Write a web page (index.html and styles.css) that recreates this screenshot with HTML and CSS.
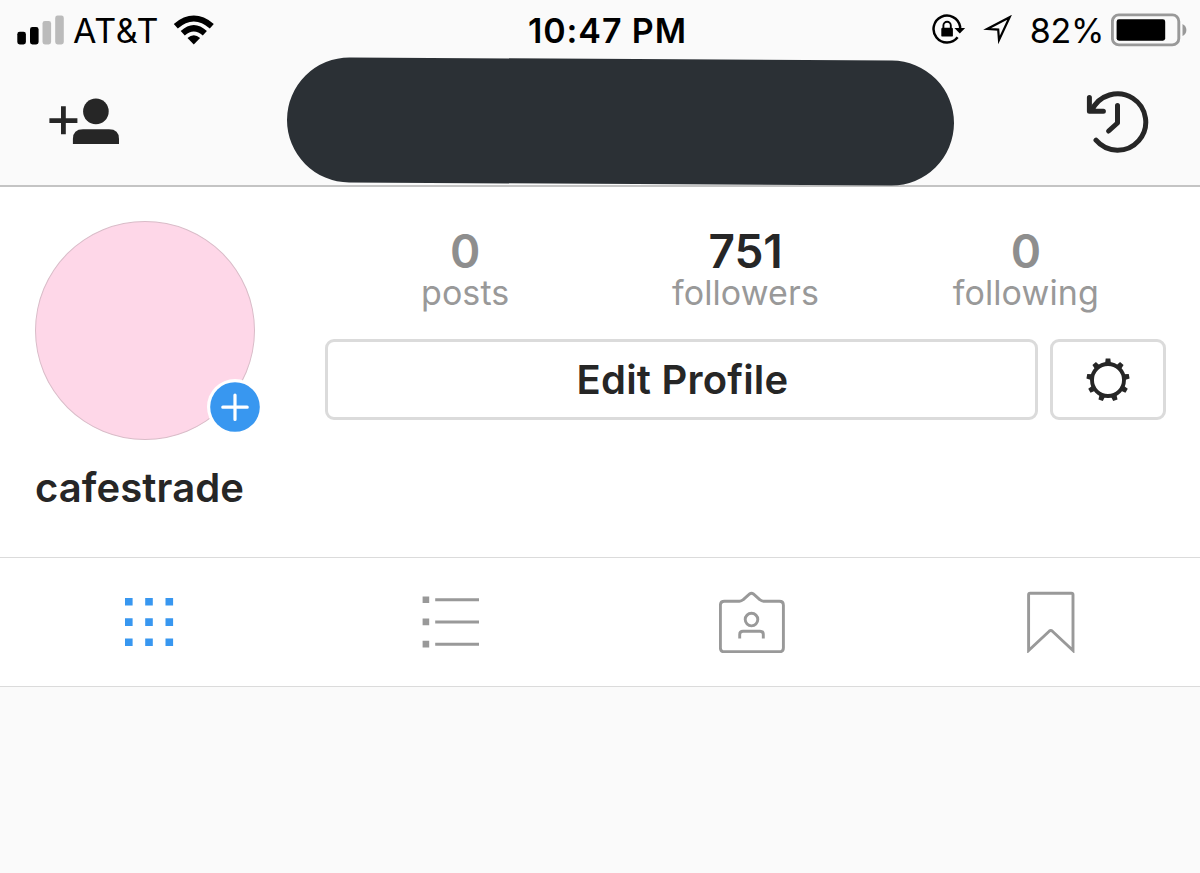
FILE: index.html
```html
<!DOCTYPE html>
<html lang="en">
<head>
  <meta charset="UTF-8">
  <title>cafestrade</title>
  <link rel="stylesheet" href="styles.css">
</head>
<body>
  <!-- Status bar -->
  <div class="status-bar">
    <div class="status-left">
      <svg class="signal" width="48" height="30" viewBox="0 0 48 30">
        <rect x="0.3" y="16.8" width="8.6" height="12.6" rx="2.4"/>
        <rect x="13" y="12" width="8.6" height="17.4" rx="2.4"/>
        <rect class="off" x="25.5" y="6" width="8.6" height="23.4" rx="2.4"/>
        <rect class="off" x="38.2" y="0.6" width="8.6" height="28.8" rx="2.4"/>
      </svg>
      <span class="carrier">AT&amp;T</span>
      <svg class="wifi" width="42" height="30" viewBox="0 0 42 30">
        <path d="M0.8 8.9 Q20.8 -7.7 40.8 8.9 L36.8 13.4 Q20.8 -0.6 4.8 13.4 Z"/>
        <path d="M7.7 16 Q20.8 4 33.9 16 L29.8 20.4 Q20.8 12.4 11.8 20.4 Z"/>
        <path d="M14.5 23 Q20.8 17.6 27.1 23 L20.8 29.6 Z"/>
      </svg>
    </div>
    <div class="status-time">10:47 PM</div>
    <div class="status-right">
      <svg class="lock" width="34" height="30" viewBox="0 0 34 30">
        <path d="M25.6 23.2 A13.4 13.4 0 1 1 28.1 12.5 V15" fill="none" stroke="#000" stroke-width="2.5"/>
        <path d="M22.4 14 H33.2 L27.8 19.4 Z"/>
        <rect x="9.3" y="13.8" width="11.6" height="8.8" rx="1.2"/>
        <path d="M11.4 14.5 V11.6 A3.7 3.8 0 0 1 18.8 11.6 V14.5" fill="none" stroke="#000" stroke-width="1.9"/>
      </svg>
      <svg class="location" width="30" height="30" viewBox="0 0 30 30">
        <path d="M26.6 2.2 L16 25 L15.2 14.6 L4.2 13.9 Z" fill="none" stroke="#000" stroke-width="2.2" stroke-miterlimit="8"/>
      </svg>
      <span class="percent">82%</span>
      <svg class="battery" width="76" height="34" viewBox="0 0 76 34">
        <rect x="1.4" y="1.9" width="66.4" height="30" rx="6.5" fill="none" stroke="#999" stroke-width="2.9"/>
        <rect x="5.6" y="6.3" width="48.6" height="21.4" rx="2.4"/>
        <path d="M71.5 11 Q75.4 13 75.4 17 Q75.4 21 71.5 23 Z" fill="#999"/>
      </svg>
    </div>
  </div>

  <!-- Navigation -->
  <header class="nav-bar">
    <svg class="add-user" width="72" height="48" viewBox="0 0 72 48">
      <path d="M14.4 9.3 V37.3 M0.4 23.6 H28.4" fill="none" stroke="#262626" stroke-width="4.8"/>
      <circle cx="46.9" cy="14.4" r="12.8"/>
      <path d="M23.9 46.9 V42 Q23.9 32.3 34 32.3 H60 Q70 32.3 70 42 V46.9 Z"/>
    </svg>
    <div class="hidden-name"></div>
    <svg class="history" width="64" height="64" viewBox="0 0 64 64">
      <path d="M5.8 19.5 A28.2 28.2 0 1 1 10 49.2"/>
      <path d="M3.4 6.5 V20.2 H17.4"/>
      <path d="M31.5 14.6 V32 L22.6 40"/>
    </svg>
  </header>

  <!-- Profile -->
  <section class="profile">
    <div class="profile-top">
      <div class="avatar">
        <svg class="avatar-add" width="56" height="56" viewBox="0 0 56 56">
          <circle cx="28" cy="28" r="28" fill="#fff"/>
          <circle cx="28" cy="28" r="24.8" fill="#3897f0"/>
          <path d="M28 16 V40.4 M15.8 28.2 H40.2" stroke="#fff" stroke-width="3.2" stroke-linecap="round"/>
        </svg>
      </div>
      <div class="info">
        <div class="stats">
          <div class="stat empty">
            <div class="count">0</div>
            <div class="label">posts</div>
          </div>
          <div class="stat">
            <div class="count">751</div>
            <div class="label">followers</div>
          </div>
          <div class="stat empty">
            <div class="count">0</div>
            <div class="label">following</div>
          </div>
        </div>
        <div class="actions">
          <button class="edit-button">Edit Profile</button>
          <button class="settings-button">
            <svg width="44" height="44" viewBox="-22 -22 44 44">
              <defs>
                <path id="tooth" d="M-3 -16 L-2.3 -21.5 H2.3 L3 -16 Z"/>
              </defs>
              <circle r="16" fill="none" stroke="#262626" stroke-width="3.9"/>
              <g fill="#262626">
                <use href="#tooth"/>
                <use href="#tooth" transform="rotate(40)"/>
                <use href="#tooth" transform="rotate(80)"/>
                <use href="#tooth" transform="rotate(120)"/>
                <use href="#tooth" transform="rotate(160)"/>
                <use href="#tooth" transform="rotate(200)"/>
                <use href="#tooth" transform="rotate(240)"/>
                <use href="#tooth" transform="rotate(280)"/>
                <use href="#tooth" transform="rotate(320)"/>
              </g>
            </svg>
          </button>
        </div>
      </div>
    </div>
    <h1 class="username">cafestrade</h1>
  </section>

  <!-- Tabs -->
  <nav class="tabs">
    <div class="tab active">
      <svg width="50" height="50" viewBox="0 0 50 50">
        <path d="M0 1h7.6v7.6h-7.6z M20.2 1h7.6v7.6h-7.6z M40.5 1h7.6v7.6h-7.6z
                 M0 21.3h7.6v7.6h-7.6z M20.2 21.3h7.6v7.6h-7.6z M40.5 21.3h7.6v7.6h-7.6z
                 M0 41.5h7.6v7.6h-7.6z M20.2 41.5h7.6v7.6h-7.6z M40.5 41.5h7.6v7.6h-7.6z"/>
      </svg>
    </div>
    <div class="tab list">
      <svg width="58" height="54" viewBox="0 0 58 54">
        <path d="M1.6 1.4h6.6v6.6h-6.6z M1.6 23.6h6.6v6.6h-6.6z M1.6 45.8h6.6v6.6h-6.6z
                 M14.2 3.3h43.8v3h-43.8z M14.2 25.5h43.8v3h-43.8z M14.2 47.7h43.8v3h-43.8z"/>
      </svg>
    </div>
    <div class="tab outline">
      <svg width="66" height="62" viewBox="0 0 66 62">
        <path d="M5.4 10.2 H20.5 Q22.5 10.2 24 8.8 L30.6 3 Q32.5 1.6 34.4 3 L41 8.8 Q42.5 10.2 44.5 10.2 H60.4 Q64.4 10.2 64.4 14.2 V56.8 Q64.4 60.8 60.4 60.8 H5.4 Q1.4 60.8 1.4 56.8 V14.2 Q1.4 10.2 5.4 10.2 Z"/>
        <circle cx="32.5" cy="28.6" r="6.3"/>
        <path d="M20.7 47.5 V43.5 Q20.7 40.3 24 40.3 H41 Q44.3 40.3 44.3 43.5 V47.5"/>
      </svg>
    </div>
    <div class="tab outline bookmark">
      <svg width="48" height="62" viewBox="0 0 48 62">
        <path d="M3.2 2.2 H44.4 Q46 2.2 46 3.8 V59.5 L25.4 40.2 Q23.8 38.8 22.2 40.2 L1.6 59.5 V3.8 Q1.6 2.2 3.2 2.2 Z"/>
      </svg>
    </div>
  </nav>
</body>
</html>
```

FILE: styles.css
```css
* { margin: 0; padding: 0; box-sizing: border-box; }
body {
  font-family: Inter, "Liberation Sans", sans-serif;
  background: #fafafa;
  color: #262626;
}
svg {
  display: block;
  flex-shrink: 0;
}

/* Status bar */
.status-bar {
  display: grid;
  grid-template-columns: 1fr auto 1fr;
  align-items: center;
  height: 60px;
  padding: 0 13px 0 17px;
  color: #000;
  font-size: 34px;
  line-height: 60px;
}
.status-left,
.status-right {
  display: flex;
  align-items: center;
}
.status-right {
  justify-content: flex-end;
}
.status-right svg,
.signal,
.wifi {
  margin-bottom: 2px;
}
.status-right .lock {
  margin-bottom: 3px;
}
.signal .off {
  fill: #bbb;
}
.carrier {
  margin-left: 8px;
  padding-top: 1px;
  letter-spacing: 0.7px;
}
.wifi {
  margin-left: 14px;
}
.status-time {
  padding-top: 1px;
  font-weight: 600;
  letter-spacing: 0.9px;
  margin-left: 11px;
}
.location {
  margin-left: 17px;
}
.percent {
  margin: 0 7px 0 17px;
  padding-top: 1px;
  letter-spacing: -0.3px;
}

/* Navigation */
.nav-bar {
  display: flex;
  align-items: center;
  justify-content: space-between;
  height: 127px;
  padding: 0 50px 0 49px;
  border-bottom: 2px solid #c4c4c4;
}
.add-user {
  margin-bottom: 4px;
  fill: #262626;
}
.hidden-name {
  width: 667px;
  height: 125px;
  margin-left: 33px;
  margin-bottom: 2px;
  border-radius: 63px;
  background: #2b3035;
  transform: rotate(0.32deg);
}
.history {
  fill: none;
  stroke: #262626;
  stroke-width: 5;
  stroke-linecap: round;
  stroke-linejoin: round;
}

/* Profile */
.profile {
  height: 370px;
  padding: 34px 34px 0 35px;
  background: #fff;
}
.profile-top {
  display: flex;
  gap: 70px;
}
.avatar {
  position: relative;
  width: 220px;
  height: 219px;
  border: 1.5px solid #d9bcc8;
  border-radius: 50%;
  background: #fed7e8;
}
.avatar-add {
  position: absolute;
  right: -8.5px;
  bottom: 4.5px;
}
.info {
  flex: 1;
  padding-top: 8px;
}
.stats {
  display: grid;
  grid-template-columns: repeat(3, 1fr);
  text-align: center;
}
.count {
  font-size: 46px;
  font-weight: 600;
  line-height: 45px;
  letter-spacing: -0.2px;
}
.label {
  margin-top: 1px;
  font-size: 34px;
  letter-spacing: 0.1px;
  line-height: 36px;
  color: #999;
}
.empty .count {
  color: #8e8e8e;
}
.actions {
  display: flex;
  gap: 12px;
  margin-top: 28px;
}
.actions button {
  display: flex;
  align-items: center;
  justify-content: center;
  height: 81px;
  border: 3px solid #dbdbdb;
  border-radius: 9px;
  background: #fff;
  color: #262626;
  font: 600 40px Inter, "Liberation Sans", sans-serif;
}
.actions .edit-button {
  flex: 1;
  padding-left: 2px;
  letter-spacing: 0.2px;
}
.settings-button {
  width: 116px;
}
.username {
  margin-top: 23px;
  font-size: 40px;
  font-weight: 600;
  letter-spacing: 0.1px;
  line-height: 50px;
}

/* Tabs */
.tabs {
  display: grid;
  grid-template-columns: repeat(4, 1fr);
  height: 130px;
  border-top: 1px solid #dbdbdb;
  border-bottom: 1px solid #dbdbdb;
  background: #fff;
}
.tab {
  display: flex;
  align-items: center;
  justify-content: center;
  fill: #999;
}
.tab.active {
  fill: #3897f0;
}
.tab.list {
  padding-bottom: 1px;
}
.tab.outline {
  padding: 0 0 1px 4px;
  fill: none;
  stroke: #999;
  stroke-width: 2.9;
}
.tab.bookmark {
  padding-left: 2px;
}
```
